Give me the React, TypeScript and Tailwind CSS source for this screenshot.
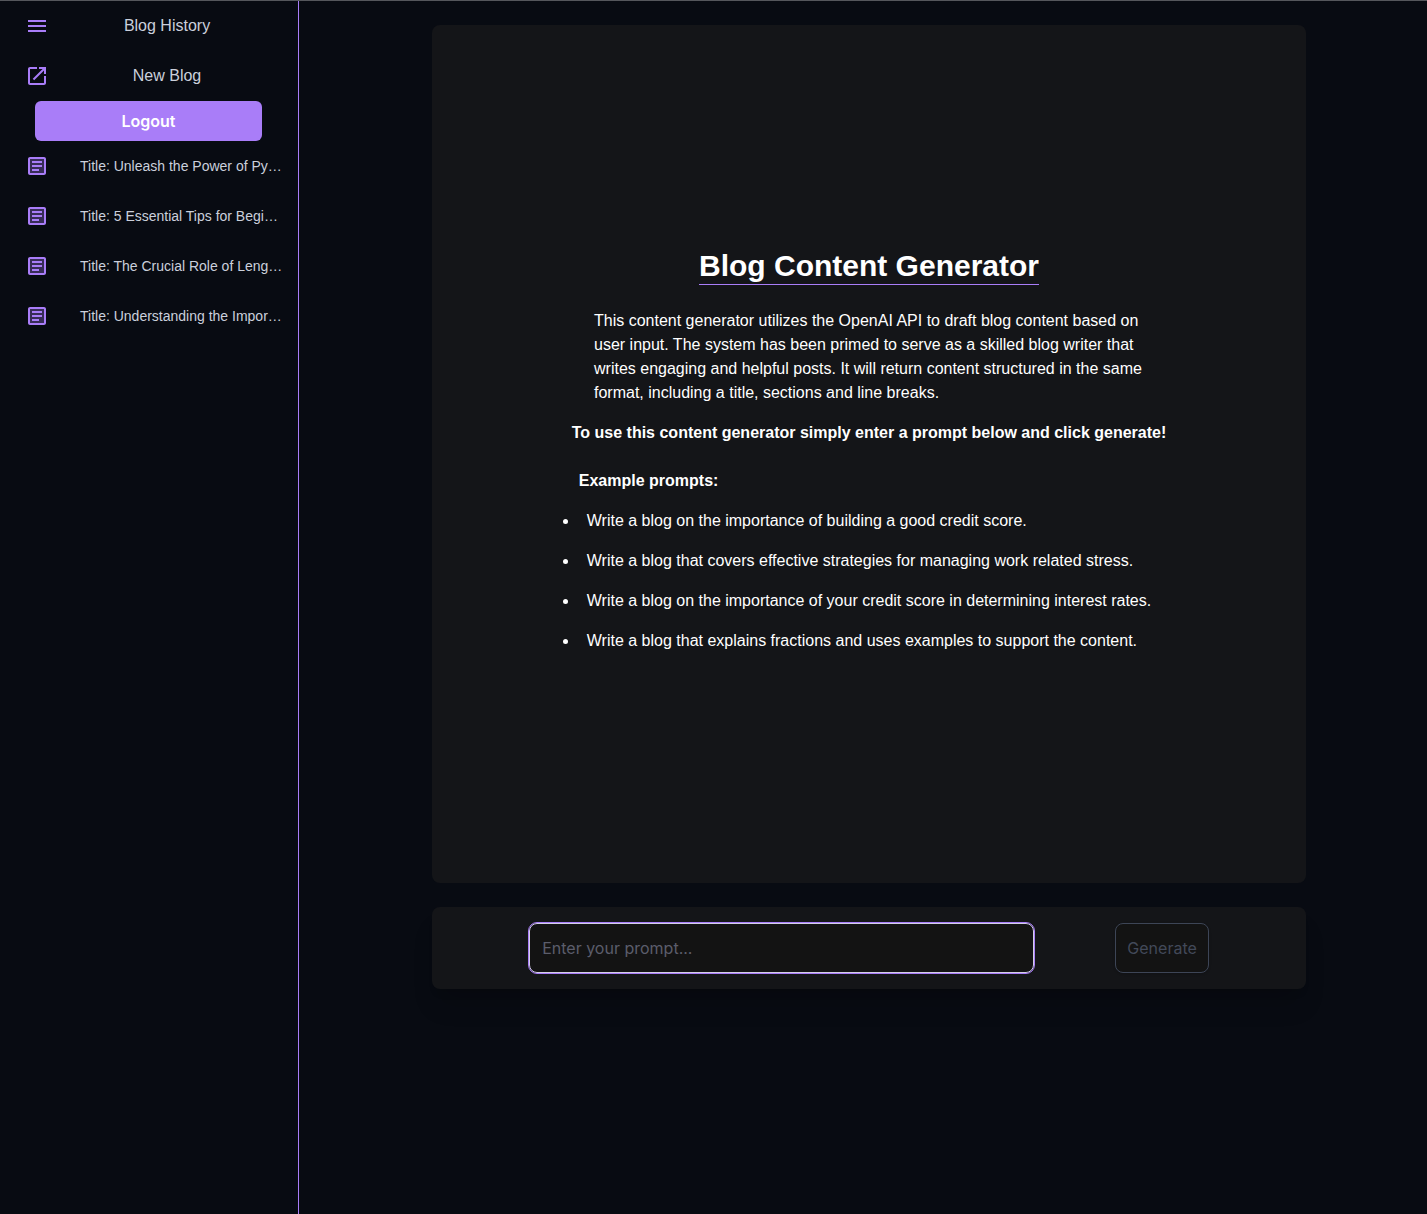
import type { ReactNode } from "react";

const history = [
  "Title: Unleash the Power of Py…",
  "Title: 5 Essential Tips for Begi…",
  "Title: The Crucial Role of Leng…",
  "Title: Understanding the Impor…",
];

const prompts = [
  "Write a blog on the importance of building a good credit score.",
  "Write a blog that covers effective strategies for managing work related stress.",
  "Write a blog on the importance of your credit score in determining interest rates.",
  "Write a blog that explains fractions and uses examples to support the content.",
];

function Icon({ children }: { children: ReactNode }) {
  return (
    <svg viewBox="0 0 24 24" className="size-6 shrink-0 fill-[#a97df8]" aria-hidden="true">
      {children}
    </svg>
  );
}

function MenuIcon() {
  return (
    <Icon>
      <path d="M3 18h18v-2H3v2zm0-5h18v-2H3v2zm0-7v2h18V6H3z" />
    </Icon>
  );
}

function OpenIcon() {
  return (
    <Icon>
      <path d="M19 19H5V5h7V3H5c-1.11 0-2 .9-2 2v14c0 1.1.89 2 2 2h14c1.1 0 2-.9 2-2v-7h-2v7zM14 3v2h3.59l-9.83 9.83 1.41 1.41L19 6.41V10h2V3h-7z" />
    </Icon>
  );
}

function ArticleIcon() {
  return (
    <Icon>
      <path opacity=".3" d="M5 5v14h14V5H5zm9 12H7v-2h7v2zm3-4H7v-2h10v2zm0-4H7V7h10v2z" />
      <path d="M19 5v14H5V5h14m0-2H5c-1.1 0-2 .9-2 2v14c0 1.1.9 2 2 2h14c1.1 0 2-.9 2-2V5c0-1.1-.9-2-2-2z" />
      <path d="M14 17H7v-2h7v2zm3-4H7v-2h10v2zm0-4H7V7h10v2z" />
    </Icon>
  );
}

function Sidebar() {
  return (
    <aside className="w-[299px] shrink-0 border-r border-[#a97df8] text-[#cbd0dc]">
      <button type="button" className="flex h-[50px] w-full items-center pl-[25px] pr-[45px]">
        <MenuIcon />
        <span className="ml-8 flex-1 text-center">Blog History</span>
      </button>
      <button type="button" className="flex h-[50px] w-full items-center pl-[25px] pr-[45px]">
        <OpenIcon />
        <span className="ml-8 flex-1 text-center">New Blog</span>
      </button>
      <div className="pl-[35px] pr-9">
        <button
          type="button"
          className="h-10 w-full rounded-md bg-[#a97df8] font-[Inter,sans-serif] font-semibold text-white"
        >
          Logout
        </button>
      </div>
      <ul>
        {history.map((title) => (
          <li key={title}>
            <button type="button" className="flex h-[50px] w-full items-center pl-[25px] pr-3 text-left text-sm">
              <ArticleIcon />
              <span className="ml-[31px] min-w-0 flex-1 whitespace-nowrap">{title}</span>
            </button>
          </li>
        ))}
      </ul>
    </aside>
  );
}

export default function App() {
  return (
    <div className="flex min-h-screen border-t border-[#55575c] bg-[#080b12] font-['Liberation_Sans',Arial,sans-serif] text-base text-white">
      <Sidebar />
      <main className="flex min-w-0 flex-1 flex-col items-center gap-6 py-6 pl-3">
        <section className="flex min-h-[858px] w-[78.3%] flex-col items-center justify-center rounded-lg bg-[#141518] pb-2">
          <h1 className="border-b border-[#a97df8] text-3xl font-bold">Blog Content Generator</h1>
          <p className="mt-6 w-[550px] max-w-full">
            This content generator utilizes the OpenAI API to draft blog content based on user input. The system has
            been primed to serve as a skilled blog writer that writes engaging and helpful posts. It will return
            content structured in the same format, including a title, sections and line breaks.
          </p>
          <p className="mt-4 font-bold">To use this content generator simply enter a prompt below and click generate!</p>
          <div className="mt-6 pr-2">
            <h2 className="font-bold">Example prompts:</h2>
            <ul className="mt-4 list-disc space-y-4">
              {prompts.map((prompt) => (
                <li key={prompt} className="pl-2">
                  {prompt}
                </li>
              ))}
            </ul>
          </div>
        </section>
        <form
          className="flex w-[78.3%] items-center justify-evenly rounded-lg bg-[#141518] p-4 shadow-xl shadow-black/15"
          onSubmit={(event) => event.preventDefault()}
        >
          <input
            type="text"
            aria-label="Prompt"
            placeholder="Enter your prompt..."
            className="h-[50px] w-3/5 rounded-lg border border-[#d3cfe8] bg-[#131313] px-3 font-[Inter,sans-serif] outline outline-[#a97df8] placeholder:text-[#5b5d6b]"
          />
          <button
            type="submit"
            disabled
            className="h-[50px] rounded-lg border border-[#3d4556] bg-[#131313] px-[11px] font-[Inter,sans-serif] text-[#424959] shadow-sm"
          >
            Generate
          </button>
        </form>
      </main>
    </div>
  );
}
